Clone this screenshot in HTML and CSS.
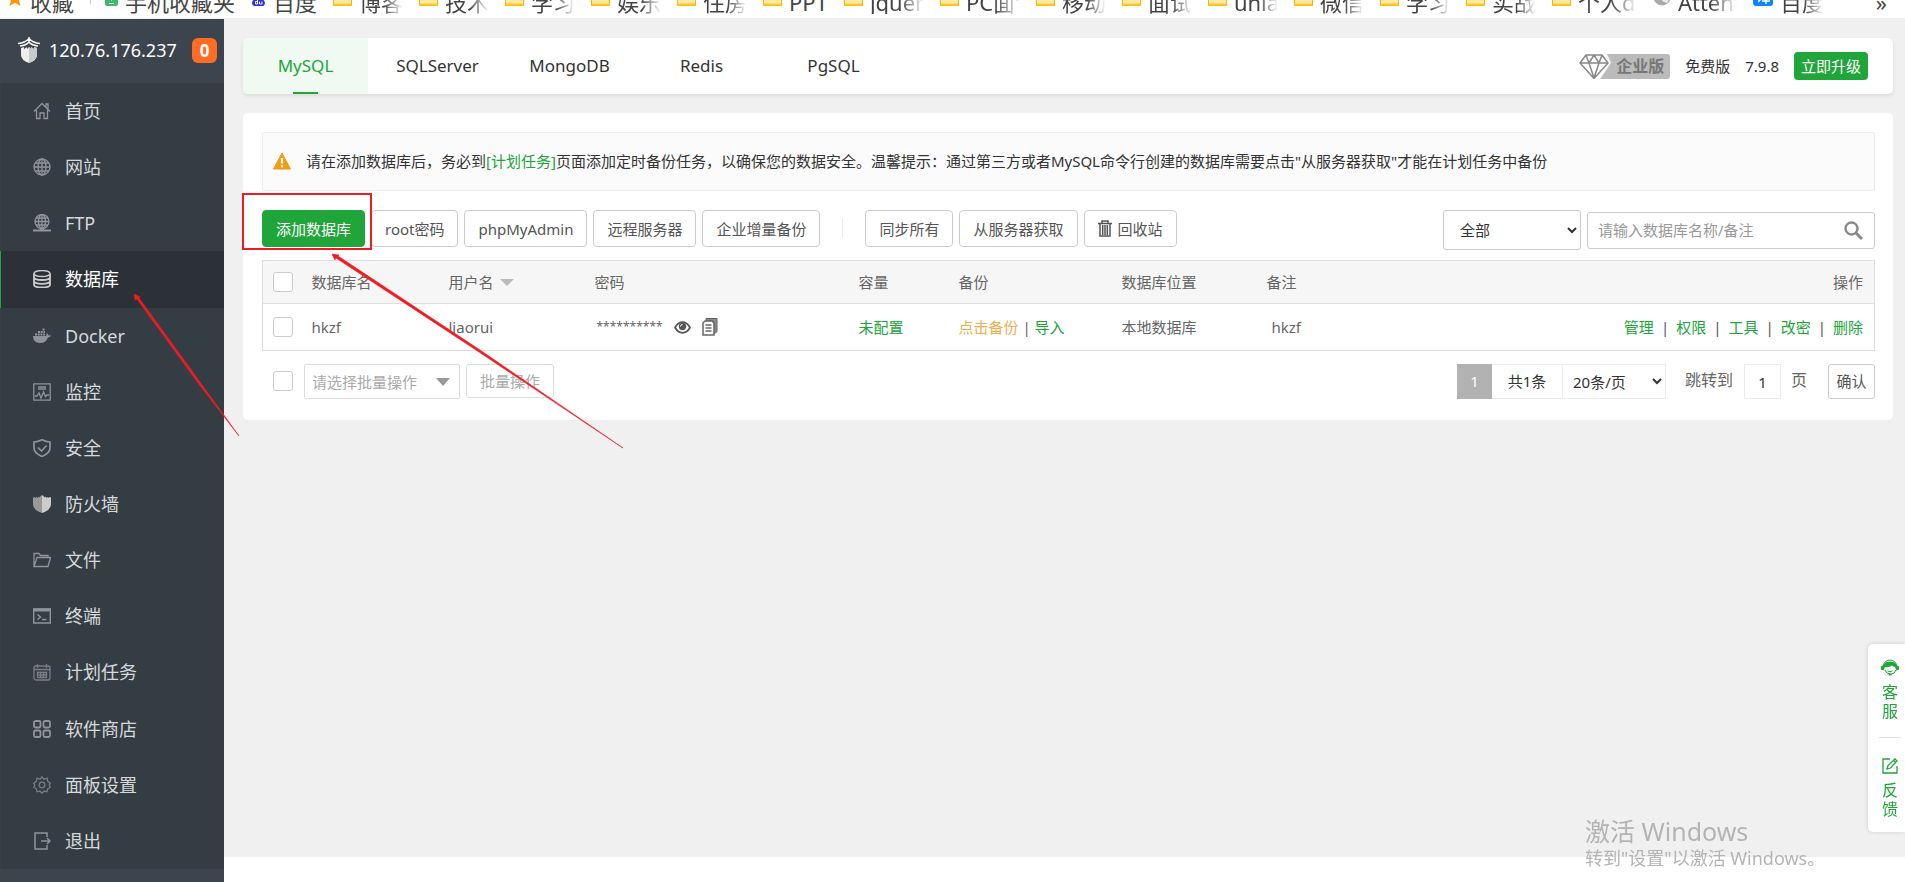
FILE: index.html
```html
<!DOCTYPE html>
<html lang="zh-CN">
<head>
<meta charset="utf-8">
<title>数据库</title>
<link rel="stylesheet" href="styles.css">
</head>
<body>
<svg class="defs" aria-hidden="true">
  <symbol id="folder" viewBox="0 0 19 16"><path d="M.5 .5h7l2 2.500h9v12.500H.5z" fill="#ffe9a6" stroke="#f7b500"/><path d="M1 14.500h17" stroke="#ffca28" stroke-width="2"/></symbol>
</svg>
<nav class="bookmarks" aria-label="书签栏">
  <a class="mark first"><svg width="16" height="16" viewBox="0 0 16 16"><path fill="#ff9500" d="M8 0l2.400 5.500 5.600.5-4.200 3.900L13.500 16 8 12.700 2.500 16l1.700-6.100L0 6l5.600-.5z"/></svg><span>收藏</span></a>
  <i class="mark-sep"></i>
  <a class="mark"><svg width="13" height="16" viewBox="0 0 13 16"><rect width="13" height="16" rx="2" fill="#3cb96b"/><path fill="#fff" d="M2 2h9v7H8l-1.500 2L5 9H2z"/><path stroke="#fff" d="M4 13.500h5"/></svg><span>手机收藏夹</span></a>
  <a class="mark"><svg width="15" height="16" viewBox="0 0 15 16"><ellipse cx="4.500" cy="3" rx="2" ry="3" fill="#2932e1"/><ellipse cx="10" cy="3" rx="2" ry="3" fill="#2932e1"/><path fill="#2932e1" d="M7.500 6c2 0 3 2 5 4s2 6-1 6H4c-3 0-4-4-1.500-6S5.500 6 7.500 6z"/><path stroke="#fff" fill="none" d="M6.500 9.500v4.500H4.500v-2.500h2M8.500 11.500V14H11v-2.500"/></svg><span>百度</span></a>
  <a class="mark"><svg class="fold"><use href="#folder"/></svg><span class="fade">博客</span></a>
  <a class="mark"><svg class="fold"><use href="#folder"/></svg><span class="fade">技术</span></a>
  <a class="mark"><svg class="fold"><use href="#folder"/></svg><span class="fade">学习</span></a>
  <a class="mark"><svg class="fold"><use href="#folder"/></svg><span class="fade">娱乐</span></a>
  <a class="mark"><svg class="fold"><use href="#folder"/></svg><span class="fade">住房</span></a>
  <a class="mark"><svg class="fold"><use href="#folder"/></svg><span>PPT</span></a>
  <a class="mark"><svg class="fold"><use href="#folder"/></svg><span class="fade mid">jquery</span></a>
  <a class="mark"><svg class="fold"><use href="#folder"/></svg><span class="fade mid">PC面试</span></a>
  <a class="mark"><svg class="fold"><use href="#folder"/></svg><span class="fade">移动</span></a>
  <a class="mark"><svg class="fold"><use href="#folder"/></svg><span class="fade">面试</span></a>
  <a class="mark"><svg class="fold"><use href="#folder"/></svg><span class="fade">uniapp</span></a>
  <a class="mark"><svg class="fold"><use href="#folder"/></svg><span class="fade">微信</span></a>
  <a class="mark"><svg class="fold"><use href="#folder"/></svg><span class="fade">学习</span></a>
  <a class="mark"><svg class="fold"><use href="#folder"/></svg><span class="fade">实战</span></a>
  <a class="mark"><svg class="fold"><use href="#folder"/></svg><span class="fade wide">个人dem</span></a>
  <a class="mark"><svg width="18" height="18" viewBox="0 0 18 18"><circle cx="9" cy="9" r="8.500" fill="#aaa"/><path fill="#eee" d="M9 4l5-1 3 6-3 6-5-2 2-4z"/></svg><span class="fade wide">Attention</span></a>
  <a class="mark"><svg width="20" height="18" viewBox="0 0 20 18"><rect width="20" height="18" rx="3" fill="#0d84ff"/><path stroke="#fff" stroke-width="1.500" fill="none" d="M4 5h2v8l2-2M9 4h7l-6 5M12 6l4 3M9 10h8M9 13h8M13 9v7"/></svg><span class="fade">百度翻译</span></a>
  <span class="more">»</span>
</nav>

<div class="app">
  <aside class="side">
    <header class="host">
      <svg width="22" height="26" viewBox="0 0 22 26"><g fill="none" stroke="#fff" stroke-width="1.400"><path d="M0 6.500Q7 6 11 1.500 15 6 22 6.500M2 9Q8 8.500 11 5q3 3.500 9 4M11 0v5"/></g><path fill="#eee" d="M3 11l3-1v2l3-2v2l2-2 2 2v-2l3 2v-2l3 1v7q0 5-8 8-8-3-8-8z"/><path fill="#c8cbce" d="M11 10l2 2v-2l3 2v-2l3 1v7q0 5-8 8z"/></svg>
      <span class="ip">120.76.176.237</span>
      <span class="count">0</span>
    </header>
    <ul class="menu">
      <li><a href="#"><svg viewBox="0 0 18 18"><path d="M1 9.500L9 1.500l8 8M3.500 8v8.500H7V11h4v5.500h3.500V8M13 5V2h2v5"/></svg>首页</a></li>
      <li><a href="#"><svg viewBox="0 0 18 18"><circle cx="9" cy="9" r="8"/><ellipse cx="9" cy="9" rx="4" ry="8"/><path d="M9 1v16M1 9h16M2.500 5h13M2.500 13h13"/></svg>网站</a></li>
      <li><a href="#"><svg viewBox="0 0 18 18"><circle cx="9" cy="7.500" r="7"/><ellipse cx="9" cy="7.500" rx="3.500" ry="7"/><path d="M9 .5v14M2 7.500h14M3 4h12M3 11h12"/><path stroke-width="2" d="M0 16.500h18M7 16h4"/></svg>FTP</a></li>
      <li class="on"><a href="#"><svg viewBox="0 0 18 18"><ellipse cx="9" cy="3.500" rx="8" ry="3"/><path stroke-width="1.800" d="M1 3.500v11c0 4 16 4 16 0v-11M1 7c0 4 16 4 16 0M1 10.800c0 4 16 4 16 0"/></svg>数据库</a></li>
      <li><a href="#"><svg viewBox="0 0 18 18"><path class="fill" d="M0 9h13q1-1 .5-3 2 .5 2 2.500 1.500-.5 2.500 0-1 2-3 2Q13 16 7 16 0 16 0 9z"/><path stroke-width="2" stroke-dasharray="2 .7" d="M2 7.500h10M5 5h7M9.500 2.500h2.500"/></svg>Docker</a></li>
      <li><a href="#"><svg viewBox="0 0 18 18"><path d="M.8.8h16.400v16.400H.8zM5 4h8M5 6h8M2 13h2l2-3 2 5 2.500-6 2 4.500 1.500-1.500h2"/></svg>监控</a></li>
      <li><a href="#"><svg viewBox="0 0 18 18"><path stroke-width="1.700" d="M9 .8q4 2.200 8 2.200v6q0 5-8 8.500Q1 14 1 9V3q4 0 8-2.200zM5 8.500L8.500 12l5-5.500"/></svg>安全</a></li>
      <li><a href="#"><svg viewBox="0 0 18 18"><path fill="#999" stroke="none" d="M9 0v18Q0 15 0 9.500V2.500l2-.5v1l2-1v1l2-1.500v1z"/><path fill="#ccc" stroke="none" d="M9 0v18q9-3 9-8.500V2.500L16 2v1l-2-1v1l-2-1.500v1z"/></svg>防火墙</a></li>
      <li><a href="#"><svg viewBox="0 0 18 18"><path d="M1 15.500V2.500h5l1.500 2H15V7M1 15.500L4 6.500h13.500l-2.500 9z"/></svg>文件</a></li>
      <li><a href="#"><svg viewBox="0 0 18 18"><path stroke-width="1.500" d="M.7 2h16.600v14H.7zM4.500 7.500L7.500 10l-3 2.500M9 12.500h4.500"/><path stroke-width="3" d="M0 3h18"/></svg>终端</a></li>
      <li class="dim"><a href="#"><svg viewBox="0 0 18 18"><rect x="1" y="3" width="16" height="14" rx="2"/><path d="M1 6.500h16M4.500 1v4M13.500 1v4M4 9.500h10M4 12h10M4 14.500h10M4.500 8.500v6M7.500 8.500v6M10.500 8.500v6M13.500 8.500v6"/></svg>计划任务</a></li>
      <li><a href="#"><svg viewBox="0 0 18 18"><g stroke-width="1.800"><rect x="1" y="1" width="6.500" height="6.500" rx="1.500"/><rect x="10.500" y="1" width="6.500" height="6.500" rx="1.500"/><rect x="1" y="10.500" width="6.500" height="6.500" rx="1.500"/><rect x="10.500" y="10.500" width="6.500" height="6.500" rx="1.500"/></g></svg>软件商店</a></li>
      <li class="dim"><a href="#"><svg viewBox="0 0 18 18"><circle cx="9" cy="9" r="2.800"/><path d="M9 .8l2 2.400 3-1 .7 3.100 2.500 2-1 1.700 1 2.200-2.500 1.600-.7 3-3-.8L9 17.200 7 15l-3 .8-.7-3-2.500-1.600 1-2.200-1-1.700 2.500-2 .7-3.100 3 1z"/></svg>面板设置</a></li>
      <li><a href="#"><svg viewBox="0 0 18 18"><path stroke-width="1.500" d="M14 5V1H2v16h12v-4M8 9h9M14 6l3 3-3 3"/></svg>退出</a></li>
    </ul>
  </aside>

  <div class="page">
    <main class="content">
      <section class="tabs">
        <button class="tab on" type="button">MySQL</button>
        <button class="tab" type="button">SQLServer</button>
        <button class="tab" type="button">MongoDB</button>
        <button class="tab" type="button">Redis</button>
        <button class="tab" type="button">PgSQL</button>
        <div class="edition">
          <div class="pro">
            <svg width="34" height="25" viewBox="0 0 34 25"><path fill="#bbb" d="M28 0h6v25H21L32 9z"/><path fill="#fff" stroke="#888" stroke-width="1.500" stroke-linejoin="round" d="M7 1h16l6 8-14 15.500L1 9zM1 9h28M7 1l3 8 5-8 5 8 3-8M10 9l5 15 5-15"/></svg><span class="pro-name">企业版</span>
          </div>
          <span>免费版</span>
          <span>7.9.8</span>
          <button class="upgrade" type="button">立即升级</button>
        </div>
      </section>

      <section class="card">
        <div class="notice">
          <svg width="18" height="18" viewBox="0 0 18 18"><path fill="#f39c12" stroke="#f39c12" stroke-linejoin="round" d="M9 1l8.500 16H.5z"/><path stroke="#fff" stroke-width="2.200" d="M9 6v5.500M9 13v2.200"/></svg>
          <p>请在添加数据库后，务必到<a href="#">[计划任务]</a>页面添加定时备份任务，以确保您的数据安全。温馨提示：通过第三方或者MySQL命令行创建的数据库需要点击"从服务器获取"才能在计划任务中备份</p>
        </div>

        <div class="tools">
          <button class="btn primary" type="button">添加数据库</button>
          <button class="btn" type="button">root密码</button>
          <button class="btn" type="button">phpMyAdmin</button>
          <button class="btn" type="button">远程服务器</button>
          <button class="btn" type="button">企业增量备份</button>
          <i class="split"></i>
          <button class="btn" type="button">同步所有</button>
          <button class="btn" type="button">从服务器获取</button>
          <button class="btn" type="button"><svg width="14" height="17" viewBox="0 0 14 17"><path fill="none" stroke="#555" stroke-width="1.500" d="M0 3.500h14M4 3V1h6v2M2 4v12h10V4M4.700 5v10M7 5v10M9.300 5v10"/></svg>回收站</button>
          <div class="filters">
            <select class="kind" aria-label="数据库类型"><option>全部</option></select>
            <div class="search">
              <input type="text" placeholder="请输入数据库名称/备注" aria-label="搜索数据库">
              <button type="button" aria-label="搜索"><svg width="19" height="19" viewBox="0 0 19 19"><circle cx="7.500" cy="7.500" r="6" fill="none" stroke="#888" stroke-width="2.400"/><path stroke="#888" stroke-width="3" d="M12 12l6 6"/></svg></button>
            </div>
          </div>
        </div>

        <table class="dbs">
          <colgroup><col class="c-check"><col class="c-name"><col class="c-user"><col class="c-pass"><col class="c-size"><col class="c-back"><col class="c-place"><col class="c-note"><col></colgroup>
          <thead>
            <tr><th class="pick"><input type="checkbox" aria-label="全选"></th><th>数据库名</th><th>用户名<svg class="sort" width="14" height="7" viewBox="0 0 14 7"><path fill="#bbb" d="M0 0h14L7 7z"/></svg></th><th>密码</th><th>容量</th><th>备份</th><th>数据库位置</th><th>备注</th><th class="ops">操作</th></tr>
          </thead>
          <tbody>
            <tr>
              <td class="pick"><input type="checkbox" aria-label="选择 hkzf"></td>
              <td>hkzf</td>
              <td>liaorui</td>
              <td><div class="secret"><span class="stars">**********</span>
                <button type="button" aria-label="显示密码"><svg width="17" height="13" viewBox="0 0 17 13"><path fill="none" stroke="#555" stroke-width="1.700" d="M1 6.500Q4 1.200 8.500 1.200T16 6.500q-3 5.300-7.500 5.300T1 6.500z"/><circle cx="8.500" cy="5.500" r="3.700" fill="#555"/><path d="M6.500 5.500q0-2 2-2" stroke="#fff" fill="none"/></svg></button>
                <button type="button" aria-label="复制密码"><svg width="16" height="18" viewBox="0 0 16 18"><path fill="#888" stroke="#666" d="M4 .5h11v13l-2 2h-2V3H4z"/><path fill="#fff" stroke="#666" stroke-width="1.500" d="M3 3h7l2 2v12H1V5z"/><path stroke="#666" stroke-width="1.400" d="M3.500 7h6M3.500 10h6M3.500 13h6"/></svg></button></div></td>
              <td><a href="#">未配置</a></td>
              <td><a class="warn" href="#">点击备份</a> | <a href="#">导入</a></td>
              <td>本地数据库</td>
              <td class="note">hkzf</td>
              <td class="ops"><a href="#">管理</a><i>|</i><a href="#">权限</a><i>|</i><a href="#">工具</a><i>|</i><a href="#">改密</a><i>|</i><a href="#">删除</a></td>
            </tr>
          </tbody>
        </table>

        <div class="foot">
          <input type="checkbox" aria-label="批量选择">
          <div class="batch">
            <select aria-label="批量操作"><option>请选择批量操作</option></select>
            <svg width="14" height="8" viewBox="0 0 14 8"><path fill="#999" d="M0 0h14L7 8z"/></svg>
          </div>
          <button class="batch-go" type="button">批量操作</button>
          <div class="pager">
            <span class="now">1</span>
            <span class="total">共1条</span>
            <select aria-label="每页条数"><option>20条/页</option></select>
            <label class="jump" for="goto">跳转到</label>
            <input id="goto" type="text" value="1">
            <span class="unit">页</span>
            <button type="button">确认</button>
          </div>
        </div>
      </section>
    </main>
    <footer class="bottom"></footer>
  </div>
</div>

<aside class="help">
  <a href="#"><svg width="18" height="17" viewBox="0 0 18 17"><path fill="none" stroke="#20a53a" d="M2 8a7 7 0 0 1 14 0M15 11q-1 4-6 4.500"/><path fill="#20a53a" d="M0 7.500l2-1Q4 2.500 9 2.500t7 4l2 1v3l-2.500 1L14 8q-2-.5-3-1.500Q8 9 4 8l-1.500 3.500-2.500-1zM7.500 14.500h3v2h-3z"/><path fill="none" stroke="#20a53a" d="M4 11q1.500 4 5 4M6.500 12q2.500 1.500 5 0"/></svg><span>客服</span></a>
  <a href="#"><svg width="16" height="16" viewBox="0 0 16 16"><path fill="none" stroke="#20a53a" stroke-width="1.300" d="M8 1H1v14h14V8M5 11l1-3.500L13 1l2 2-6.500 7zM12 3l1.500 1.500"/></svg><span>反馈</span></a>
</aside>

<div class="activate"><p>激活 Windows</p><p>转到"设置"以激活 Windows。</p></div>

<div class="frame"></div>
<svg class="arrows" width="640" height="460" viewBox="0 0 640 460" aria-hidden="true">
  <g fill="#ed1c24" stroke="#ed1c24" stroke-width=".6" stroke-linejoin="round">
    <path d="M134 294l6 3-1 1 61 84 39 54-41-53-61-84-2 1z"/>
    <path d="M332 254l7 1-1 1 142 94 143 98-144-96-143-94-1 2z"/>
  </g>
</svg>
</body>
</html>
```
FILE: styles.css
```css
* { box-sizing: border-box; }
body {
  margin: 0;
  min-height: 100vh;
  display: flex;
  flex-direction: column;
  background: #fff;
  color: #666;
  font: 15px/20px "Noto Sans", "Noto Sans CJK SC", sans-serif;
}
button, input, select { font: inherit; color: inherit; margin: 0; }
button { cursor: pointer; white-space: nowrap; }
a { color: #20a53a; text-decoration: none; }
p, ul { margin: 0; padding: 0; }
svg { flex: none; }
i { font-style: normal; }
.defs { position: absolute; width: 0; height: 0; }

/* browser bookmark strip */
.bookmarks {
  height: 19px;
  display: flex;
  align-items: flex-end;
  gap: 16px;
  padding: 0 18px 4px 7px;
  overflow: hidden;
  border-bottom: 1px solid #ececec;
  color: #444;
  font-size: 22px;
  line-height: 24px;
}
.mark { display: flex; align-items: flex-end; gap: 7px; color: #444; white-space: nowrap; flex: none; }
.mark svg { margin-bottom: 8px; }
.mark-sep { width: 1px; height: 16px; margin: 0 -2px 10px 0; background: #ccc; }
.fold { width: 19px; height: 16px; }
.fade {
  width: 44px;
  overflow: hidden;
  -webkit-mask-image: linear-gradient(to right, #000 55%, transparent);
  mask-image: linear-gradient(to right, #000 55%, transparent);
}
.fade.mid { width: 54px; }
.fade.wide { width: 59px; }
.more { margin-left: auto; }

.app { flex: 1; display: flex; }

/* sidebar */
.side { width: 224px; flex: none; display: flex; flex-direction: column; padding-bottom: 13px; background: #3c444d; }
.host { height: 64px; display: flex; align-items: center; padding: 0 7px 2px 18px; color: #fff; }
.ip { margin-left: 9px; font-size: 18px; }
.count {
  margin-left: auto;
  width: 25px;
  border-radius: 6px;
  background: #ff6c24;
  font-size: 17px;
  line-height: 25px;
  font-weight: 700;
  text-align: center;
}
.menu { flex: 1; display: flex; flex-direction: column; list-style: none; background: #353d44; }
.menu li { flex: 1; display: flex; border-left: 1px solid #3b3f42; }
.menu a { flex: 1; display: flex; align-items: center; gap: 14px; padding-left: 32px; color: #d6d9db; font-size: 18px; }
.menu svg { width: 18px; height: 18px; fill: none; stroke: #8f9498; stroke-width: 1.3; }
.menu .fill { fill: #8f9498; stroke: none; }
.menu .dim svg { stroke: #777d82; }
.menu .on { background: #2c3138; border-left-color: #20a53a; }
.menu .on a { color: #fff; }
.menu .on svg { stroke: #ccc; }

/* page */
.page { flex: 1; min-width: 0; display: flex; flex-direction: column; }
.content { flex: 1; padding: 19px 12px 19px 19px; background: #f0f0f0; }
.bottom { height: 25px; }

.tabs {
  height: 56px;
  display: flex;
  gap: 7px;
  padding-right: 25px;
  border-radius: 5px;
  background: #fff;
  box-shadow: 0 2px 4px rgba(0, 0, 0, .09);
}
.tab { width: 125px; padding: 0; border: 0; border-radius: 5px 0 0 5px; background: none; color: #333; font-size: 17px; }
.tab.on {
  background: linear-gradient(#20a53a, #20a53a) bottom / 25px 2px no-repeat #f0faf3;
  color: #20a53a;
}
.edition { margin-left: auto; display: flex; align-items: center; gap: 15px; color: #333; }
.pro { display: flex; }
.pro-name { width: 57px; padding-right: 6px; border-radius: 0 3px 3px 0; background: #bbb; color: #777; font-size: 16px; line-height: 25px; font-weight: 700; text-align: right; }
.upgrade { width: 74px; height: 28px; padding: 0; border: 0; border-radius: 4px; background: #20a53a; color: #fff; }

.card { margin-top: 19px; padding: 19px 18px 21px 19px; border-radius: 5px; background: #fff; }
.notice {
  min-height: 59px;
  display: flex;
  align-items: center;
  gap: 15px;
  padding: 0 11px 2px 10px;
  border: 1px solid #ececec;
  border-radius: 2px;
  background: #fbfbfb;
  color: #333;
}

.tools { display: flex; align-items: flex-start; gap: 6px; padding: 19px 0 10px; }
.btn {
  height: 37px;
  display: flex;
  align-items: center;
  gap: 6px;
  padding: 0 13px;
  border: 1px solid #ccc;
  border-radius: 4px;
  background: #fff;
  color: #555;
}
.btn.primary { border-color: #20a53a; background: #20a53a; color: #fff; }
.split { width: 1px; height: 20px; margin: 8px 16px 0; background: #ececec; }
.filters { margin-left: auto; display: flex; align-items: center; gap: 6px; }
.kind { width: 138px; height: 40px; padding: 0 0 0 12px; border: 1px solid #ccc; border-radius: 3px; background: #fff; color: #333; }
.search { width: 288px; height: 37px; display: flex; align-items: center; padding: 0 11px 0 10px; border: 1px solid #ccc; border-radius: 3px; }
.search input { flex: 1; min-width: 0; padding: 0; border: 0; outline: 0; }
.search input::placeholder { color: #999; }
.search button { display: flex; padding: 0; border: 0; background: none; }

input[type="checkbox"] {
  appearance: none;
  display: block;
  width: 20px;
  height: 20px;
  border: 1px solid #ccc;
  border-radius: 3px;
  background: #fff;
}

.dbs { width: 100%; table-layout: fixed; border-collapse: collapse; border: 1px solid #ddd; }
.dbs th { height: 43px; padding: 0 8px; background: #f6f6f6; border-bottom: 1px solid #ddd; font-weight: 400; text-align: left; }
.dbs td { height: 47px; padding: 0 8px; }
.dbs .pick { padding-left: 10px; }
.dbs .ops { padding-right: 11px; text-align: right; }
.dbs .note { padding-left: 13px; }
.dbs i { padding: 0 7px; color: #555; }
.c-check { width: 41px; }
.c-name { width: 137px; }
.c-user { width: 146px; }
.c-pass { width: 264px; }
.c-size { width: 100px; }
.c-back { width: 163px; }
.c-place { width: 145px; }
.c-note { width: 200px; }
.sort { margin-left: 6px; vertical-align: 2px; }
.warn { color: #f0ad4e; }
.secret { display: flex; align-items: center; gap: 11px; }
.secret button { display: flex; padding: 0; border: 0; background: none; }
.stars { padding-left: 2px; font-size: 12px; }

.foot { display: flex; align-items: flex-start; padding: 13px 0 0 11px; }
.foot > input { margin: 7px 11px 0 0; }
.batch { display: flex; align-items: center; width: 156px; height: 35px; padding-right: 9px; border: 1px solid #ddd; border-radius: 2px; color: #aaa; }
.batch select { flex: 1; min-width: 0; appearance: none; padding: 0 0 0 7px; border: 0; background: none; }
.batch-go { width: 88px; height: 34px; margin-left: 6px; padding: 0; border: 1px solid #ddd; border-radius: 3px; background: #fff; color: #aaa; }
.pager { margin-left: auto; display: flex; color: #333; line-height: 33px; }
.now { width: 35px; border: 1px solid #b2b2b2; background: #b2b2b2; color: #fff; text-align: center; }
.total { width: 71px; border: 1px solid #ececec; border-left: 0; text-align: center; }
.pager select { width: 103px; height: 35px; padding: 0 0 0 6px; border: 1px solid #ececec; border-left: 0; background: #fff; border-radius: 0; }
.jump { margin: 0 11px 0 19px; color: #666; font-size: 16px; }
.pager input { width: 37px; height: 35px; padding: 0; border: 1px solid #ececec; text-align: center; }
.unit { margin: 0 21px 0 10px; color: #666; font-size: 16px; }
.pager button { width: 47px; height: 35px; padding: 0; border: 1px solid #ccc; border-radius: 3px; background: #fff; color: #555; }

/* floating help */
.help {
  position: fixed;
  right: 0;
  bottom: 50px;
  width: 37px;
  padding: 0 4px 0 11px;
  border-radius: 5px 0 0 5px;
  background: #fff;
  box-shadow: 0 0 5px rgba(0, 0, 0, .13);
}
.help a { display: flex; flex-direction: column; align-items: center; gap: 7px; padding: 15px 0 16px; font-size: 16px; line-height: 19px; }
.help a + a { padding: 20px 0 13px; border-top: 1px solid #e2e2e2; }
.help span { width: 16px; }

/* desktop overlays */
.activate { position: fixed; right: 82px; bottom: 13px; width: 238px; color: #b4b4b4; font-size: 18px; line-height: 22px; white-space: nowrap; pointer-events: none; }
.activate p:first-child { font-size: 25px; line-height: 32px; }
.frame { position: absolute; left: 242px; top: 193px; width: 130px; height: 57px; border: 2px solid #ed1c24; pointer-events: none; }
.arrows { position: absolute; left: 0; top: 0; pointer-events: none; }
```
